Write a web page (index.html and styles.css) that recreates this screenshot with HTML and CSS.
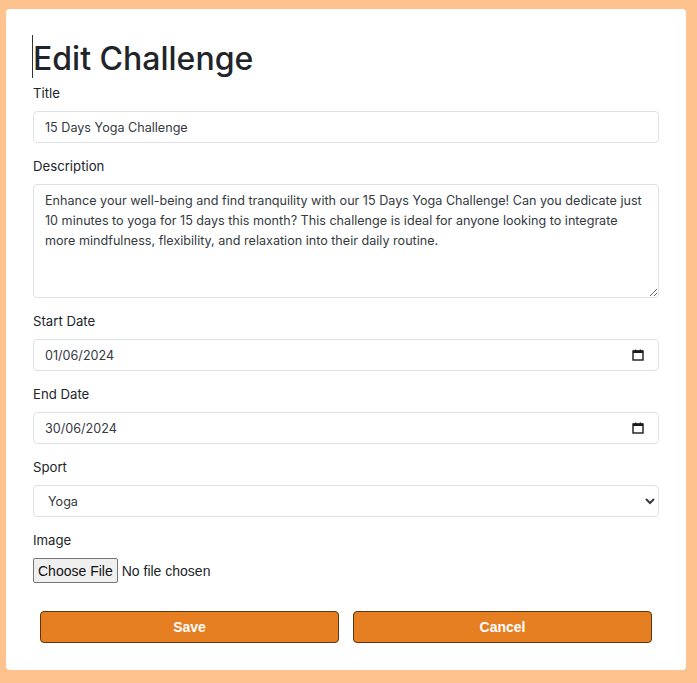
FILE: index.html
```html
<!DOCTYPE html>
<html lang="en">
<head>
<meta charset="utf-8">
<title>Edit Challenge</title>
<link rel="stylesheet" href="styles.css">
</head>
<body>
<main class="card">
  <h1 class="title"><span class="caret"></span>Edit Challenge</h1>
  <form class="form">
    <div class="group">
      <label class="label" for="title">Title</label>
      <input class="control" id="title" type="text" value="15 Days Yoga Challenge">
    </div>
    <div class="group">
      <label class="label" for="desc">Description</label>
      <textarea class="control area" id="desc">Enhance your well-being and find tranquility with our 15 Days Yoga Challenge! Can you dedicate just 10 minutes to yoga for 15 days this month? This challenge is ideal for anyone looking to integrate more mindfulness, flexibility, and relaxation into their daily routine.</textarea>
    </div>
    <div class="group">
      <label class="label" for="start">Start Date</label>
      <div class="control date">
        <input class="date-input" id="start" type="text" value="01/06/2024">
        <svg class="cal" width="12" height="12" viewBox="0 0 12 12" aria-hidden="true"><rect x="1" y="2" width="10" height="9" fill="none" stroke="#1a1a1a" stroke-width="1.4"/><rect x="1" y="1.5" width="10" height="2.5" fill="#1a1a1a"/><rect x="3" y="0.5" width="1.2" height="2" fill="#1a1a1a"/><rect x="7.8" y="0.5" width="1.2" height="2" fill="#1a1a1a"/></svg>
      </div>
    </div>
    <div class="group">
      <label class="label" for="end">End Date</label>
      <div class="control date">
        <input class="date-input" id="end" type="text" value="30/06/2024">
        <svg class="cal" width="12" height="12" viewBox="0 0 12 12" aria-hidden="true"><rect x="1" y="2" width="10" height="9" fill="none" stroke="#1a1a1a" stroke-width="1.4"/><rect x="1" y="1.5" width="10" height="2.5" fill="#1a1a1a"/><rect x="3" y="0.5" width="1.2" height="2" fill="#1a1a1a"/><rect x="7.8" y="0.5" width="1.2" height="2" fill="#1a1a1a"/></svg>
      </div>
    </div>
    <div class="group">
      <label class="label" for="sport">Sport</label>
      <select class="control select" id="sport">
        <option>Yoga</option>
        <option>Running</option>
        <option>Cycling</option>
      </select>
    </div>
    <div class="group">
      <label class="label" for="image">Image</label>
      <input class="file" id="image" type="file">
    </div>
    <div class="actions">
      <button class="btn" type="submit">Save</button>
      <button class="btn" type="button">Cancel</button>
    </div>
  </form>
</main>
</body>
</html>
```
FILE: styles.css
```css
html, body {
  margin: 0;
  padding: 0;
}
body {
  background: #fdc28e;
  font-family: Inter, "Noto Sans", sans-serif;
  color: #212529;
  padding: 9px 11px 13px 6px;
}
.card {
  background: #ffffff;
  border-radius: 4px;
  padding: 26px 27px 27px 27px;
  width: 626px;
}
.title {
  position: relative;
  margin: 0;
  font-size: 32px;
  font-weight: 500;
  line-height: 48px;
  color: #212529;
}
.caret {
  position: absolute;
  left: -1px;
  top: 0;
  width: 1px;
  height: 43px;
  background: #333;
}
.form {
  display: flex;
  flex-direction: column;
}
.group {
  display: flex;
  flex-direction: column;
  margin-bottom: 13px;
}
.label {
  font-size: 13.2px;
  line-height: 21px;
  margin-bottom: 7px;
  color: #212529;
}
.control {
  box-sizing: border-box;
  height: 32px;
  border: 1px solid #dee2e6;
  border-radius: 4px;
  padding: 0 11px;
  font-family: Inter, "Noto Sans", sans-serif;
  font-size: 12.6px;
  color: #343a40;
  background: #fff;
  width: 100%;
}
.area {
  height: 114px;
  padding: 6px 11px;
  line-height: 20px;
  resize: vertical;
}
.date {
  display: flex;
  align-items: center;
  gap: 8px;
  padding-right: 14px;
}
.date-input {
  flex: 1;
  border: 0;
  outline: none;
  padding: 0;
  font: inherit;
  color: inherit;
  background: transparent;
}
.cal {
  flex: none;
}
.select {
  padding-left: 10px;
  padding-right: 10px;
}
.file {
  font-family: "Liberation Sans", Arial, sans-serif;
  font-size: 14px;
  color: #212529;
  height: 25px;
}
.file::file-selector-button {
  font-family: "Liberation Sans", Arial, sans-serif;
  font-size: 14px;
  padding: 2px 4px;
  margin-right: 4px;
  height: 25px;
  background: #efefef;
  border: 1px solid #767676;
  border-radius: 2px;
  color: #111;
}
.actions {
  display: flex;
  gap: 14px;
  padding: 15px 7px 0 7px;
}
.btn {
  flex: 1;
  height: 32px;
  background: #e67e22;
  border: 1px solid #5a3612;
  border-radius: 4px;
  color: #fff;
  font-family: "Liberation Sans", Arial, sans-serif;
  font-weight: bold;
  font-size: 14px;
}
```
